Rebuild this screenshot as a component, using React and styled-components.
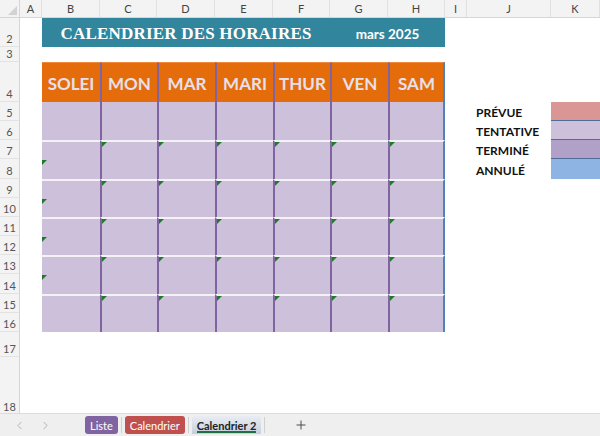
import React from "react";
import styled, { createGlobalStyle } from "styled-components";
import { ChevronLeft, ChevronRight, Plus } from "lucide-react";

const GlobalStyle = createGlobalStyle`
  html, body {
    margin: 0;
    padding: 0;
    background: #ffffff;
  }
  body {
    width: 600px;
    height: 436px;
    overflow: hidden;
    font-family: Lato, "Open Sans", sans-serif;
  }
`;

// largeurs des colonnes A..K
const COLS = [
  { name: "A", w: 22 },
  { name: "B", w: 58 },
  { name: "C", w: 57 },
  { name: "D", w: 58 },
  { name: "E", w: 58 },
  { name: "F", w: 57 },
  { name: "G", w: 58 },
  { name: "H", w: 57 },
  { name: "I", w: 22 },
  { name: "J", w: 84 },
  { name: "K", w: 49 },
];

const DAY_ROW = 230 / 12;

// hauteurs des lignes (la ligne 1 est masquée)
const ROWS = [
  { n: 2, h: 29 },
  { n: 3, h: 15 },
  { n: 4, h: 40 },
  ...Array.from({ length: 12 }, (_, i) => ({ n: i + 5, h: DAY_ROW })),
  { n: 17, h: 25 },
  { n: 18, h: 58 },
];

const DAYS = ["SOLEI", "MON", "MAR", "MARI", "THUR", "VEN", "SAM"];
const DAY_WIDTHS = [58, 57, 58, 58, 57, 58, 57];

const LEGEND = [
  { label: "PRÉVUE", color: "#DA9694" },
  { label: "TENTATIVE", color: "#CCC0DA" },
  { label: "TERMINÉ", color: "#B1A0C7" },
  { label: "ANNULÉ", color: "#8DB4E2" },
];

const Window = styled.div`
  width: 600px;
  height: 436px;
  display: flex;
  flex-direction: column;
  background: #ffffff;
`;

// --- entêtes de colonnes
const ColumnHeaderBar = styled.div`
  display: flex;
  height: 18px;
  flex-shrink: 0;
  background: #f3f3f3;
  border-bottom: 1px solid #d6d6d6;
  box-sizing: border-box;
`;

const Corner = styled.div`
  width: 20px;
  flex-shrink: 0;
  position: relative;
  border-right: 1px solid #d6d6d6;
  box-sizing: border-box;

  &::after {
    content: "";
    position: absolute;
    right: 2px;
    bottom: 2px;
    width: 0;
    height: 0;
    border-left: 9px solid transparent;
    border-bottom: 9px solid #d2d2d2;
  }
`;

const ColLetter = styled.div`
  width: ${(p) => p.w}px;
  flex-shrink: 0;
  display: flex;
  align-items: center;
  justify-content: center;
  font-size: 11px;
  color: #444;
  border-right: 1px solid #e0e0e0;
  box-sizing: border-box;
`;

// --- corps
const SheetBody = styled.div`
  display: flex;
  height: 395px;
  flex-shrink: 0;
  overflow: hidden;
`;

const RowHeader = styled.div`
  width: 20px;
  flex-shrink: 0;
  display: flex;
  flex-direction: column;
  background: #f3f3f3;
  border-right: 1px solid #d6d6d6;
  box-sizing: border-box;
  overflow: hidden;
`;

const RowNumber = styled.div`
  height: ${(p) => p.h}px;
  flex-shrink: 0;
  display: flex;
  align-items: flex-end;
  justify-content: center;
  padding-bottom: 1px;
  font-size: 11px;
  color: #555;
  border-bottom: 1px solid #e2e2e2;
  box-sizing: border-box;
`;

const Sheet = styled.div`
  flex: 1;
  display: grid;
  grid-template-columns: ${COLS.map((c) => c.w + "px").join(" ")};
  grid-template-rows: 29px 15px 40px repeat(12, ${DAY_ROW}px) 25px 1fr;
  overflow: hidden;
`;

// --- titre
const TitleBar = styled.div`
  grid-column: 2 / 9;
  grid-row: 1;
  display: grid;
  grid-template-columns: 288px 1fr;
  background: #31859c;
  color: #ffffff;
`;

const Title = styled.div`
  display: flex;
  align-items: center;
  justify-content: center;
  font-family: "Liberation Serif", "DejaVu Serif", serif;
  font-weight: bold;
  font-size: 17px;
  letter-spacing: 0.2px;
  padding-top: 2px;
`;

const Month = styled.div`
  display: flex;
  align-items: center;
  justify-content: center;
  font-weight: bold;
  font-size: 13.5px;
  padding-top: 2px;
`;

// --- calendrier
const Calendar = styled.div`
  grid-column: 2 / 9;
  grid-row: 3 / 16;
  display: grid;
  grid-template-columns: ${DAY_WIDTHS.map((w) => w + "px").join(" ")};
  grid-template-rows: 40px repeat(6, 1fr);
`;

const DayHead = styled.div`
  background: #e46c0a;
  color: #e6e0ec;
  font-weight: bold;
  font-size: 17px;
  display: flex;
  align-items: center;
  justify-content: center;
  white-space: nowrap;
  overflow: hidden;
  box-sizing: border-box;
  padding-top: 1px;
  border-top: 1px solid #f08a3a;
  border-left: ${(p) => (p.first ? "none" : "2px solid #8064a2")};
  border-right: ${(p) => (p.last ? "2px solid #4f81bd" : "none")};
`;

const DayCell = styled.div`
  position: relative;
  background: #ccc0da;
  box-sizing: border-box;
  border-left: ${(p) => (p.first ? "none" : "2px solid #8064a2")};
  border-right: ${(p) => (p.last ? "2px solid #4f81bd" : "none")};
  border-top: ${(p) => (p.topLine ? "2px solid #f4f1f7" : "none")};
`;

const Marker = styled.span`
  position: absolute;
  left: 0;
  top: ${(p) => p.top}px;
  width: 0;
  height: 0;
  border-top: 5px solid #1e7b2a;
  border-right: 5px solid transparent;
`;

// --- légende
const Legend = styled.div`
  grid-column: 10 / 12;
  grid-row: 4 / 8;
  display: grid;
  grid-template-columns: 84px 1fr;
  grid-auto-rows: ${DAY_ROW}px;
`;

const LegendLabel = styled.div`
  display: flex;
  align-items: flex-end;
  padding-left: 9px;
  padding-bottom: 1px;
  font-weight: bold;
  font-size: 12px;
  color: #111;
`;

const Swatch = styled.div`
  background: ${(p) => p.color};
  box-sizing: border-box;
  border-bottom: ${(p) => (p.last ? "none" : "1px solid #4f6d96")};
`;

// --- onglets
const TabBar = styled.div`
  flex: 1;
  display: flex;
  align-items: center;
  background: #efefef;
  border-top: 1px solid #dcdcdc;
  box-sizing: border-box;
  padding-left: 12px;
`;

const NavButton = styled.div`
  width: 14px;
  display: flex;
  justify-content: center;
  color: #a6a6a6;
  margin-right: 12px;
`;

const Tabs = styled.div`
  display: flex;
  align-items: center;
  margin-left: 21px;
`;

const Tab = styled.div`
  height: 18px;
  padding: 0 5px;
  display: flex;
  align-items: center;
  border-radius: 3px;
  font-size: 11px;
  background: ${(p) => p.bg};
  color: ${(p) => (p.active ? "#222" : "#fff")};
  font-weight: ${(p) => (p.active ? 700 : 400)};
  position: relative;
  ${(p) =>
    p.active &&
    `
    background: linear-gradient(#e9edf3, #c5cfdc);
    border-radius: 3px 3px 0 0;
    &::after {
      content: "";
      position: absolute;
      left: 5px;
      right: 5px;
      bottom: 1px;
      height: 2px;
      background: #1e7145;
    }
  `}
`;

const TabSep = styled.div`
  width: 1px;
  height: 16px;
  background: #d0d0d0;
  margin: 0 3px;
`;

const AddTab = styled.div`
  margin-left: 26px;
  display: flex;
  color: #444;
`;

const hasMarker = (col, week) => {
  if (col === 0) return week >= 1 && week <= 4;
  return week >= 1;
};

export default function App() {
  return (
    <Window>
      <GlobalStyle />
      <ColumnHeaderBar>
        <Corner />
        {COLS.map((c) => (
          <ColLetter key={c.name} w={c.w}>
            {c.name}
          </ColLetter>
        ))}
      </ColumnHeaderBar>

      <SheetBody>
        <RowHeader>
          {ROWS.map((r) => (
            <RowNumber key={r.n} h={r.h}>
              {r.n}
            </RowNumber>
          ))}
        </RowHeader>

        <Sheet>
          <TitleBar>
            <Title>CALENDRIER DES HORAIRES</Title>
            <Month>mars 2025</Month>
          </TitleBar>

          <Calendar>
            {DAYS.map((d, i) => (
              <DayHead key={d} first={i === 0} last={i === 6}>
                {d}
              </DayHead>
            ))}
            {Array.from({ length: 6 }).map((_, week) =>
              DAYS.map((d, col) => (
                <DayCell
                  key={week + "-" + col}
                  first={col === 0}
                  last={col === 6}
                  topLine={week > 0}
                >
                  {hasMarker(col, week) && <Marker top={col === 0 ? 18 : 0} />}
                </DayCell>
              ))
            )}
          </Calendar>

          <Legend>
            {LEGEND.map((l, i) => (
              <React.Fragment key={l.label}>
                <LegendLabel>{l.label}</LegendLabel>
                <Swatch color={l.color} last={i === LEGEND.length - 1} />
              </React.Fragment>
            ))}
          </Legend>
        </Sheet>
      </SheetBody>

      <TabBar>
        <NavButton>
          <ChevronLeft size={13} strokeWidth={1.5} />
        </NavButton>
        <NavButton>
          <ChevronRight size={13} strokeWidth={1.5} />
        </NavButton>
        <Tabs>
          <Tab bg="#8064a2">Liste</Tab>
          <TabSep />
          <Tab bg="#c0504d">Calendrier</Tab>
          <TabSep />
          <Tab active>Calendrier 2</Tab>
          <TabSep />
        </Tabs>
        <AddTab>
          <Plus size={14} strokeWidth={1.6} />
        </AddTab>
      </TabBar>
    </Window>
  );
}
